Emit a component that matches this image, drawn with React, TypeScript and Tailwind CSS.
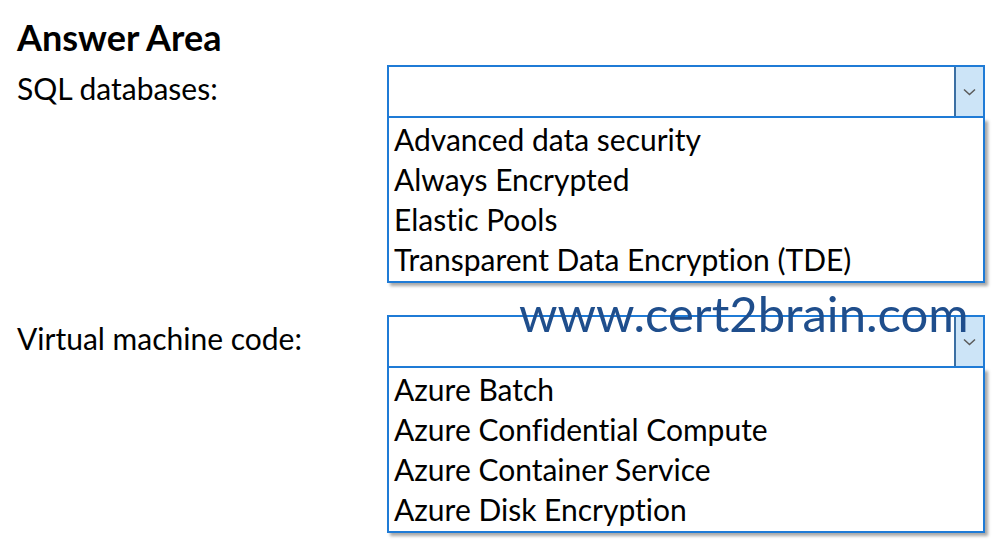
import React from 'react'

const font = { fontFamily: 'Lato, "Open Sans", sans-serif', fontVariantLigatures: 'none' as const }

function Chevron() {
  return (
    <svg width="13" height="8" viewBox="0 0 13 8" fill="none">
      <path d="M1 1.5 L6.5 6.5 L12 1.5" stroke="#5a5a5a" strokeWidth="1.5" />
    </svg>
  )
}

function Dropdown({ options }: { options: string[] }) {
  return (
    <div className="w-[598px]">
      <div className="flex h-[53px] border-2 border-[#1f7bd6] bg-white">
        <div className="flex-1" />
        <div className="flex w-[29px] items-center justify-center border-l-2 border-[#3b6fa3] bg-[#cce4f7]">
          <Chevron />
        </div>
      </div>
      <div className="border-2 border-t-0 border-[#1f7bd6] bg-white pb-[1px] pl-[5px] pt-[2px] shadow-[3px_3px_3px_rgba(0,0,0,0.35)]">
        {options.map((o) => (
          <div key={o} className="h-[40px] text-[30px] leading-[38px] text-black">
            {o}
          </div>
        ))}
      </div>
    </div>
  )
}

export default function App() {
  return (
    <div className="relative h-[549px] w-[998px] bg-white pl-[17px] pt-[19px]" style={font}>
      <h1 className="text-[36px] font-bold leading-[36px] text-black">Answer Area</h1>
      <div className="mt-[10px] grid grid-cols-[370px_598px]">
        <div className="pt-[4px] text-[30px] leading-[38px] text-black">SQL databases:</div>
        <Dropdown
          options={[
            'Advanced data security',
            'Always Encrypted',
            'Elastic Pools',
            'Transparent Data Encryption (TDE)',
          ]}
        />
      </div>
      <div className="mt-[32px] grid grid-cols-[370px_598px]">
        <div className="pt-[4px] text-[30px] leading-[38px] text-black">Virtual machine code:</div>
        <Dropdown
          options={[
            'Azure Batch',
            'Azure Confidential Compute',
            'Azure Container Service',
            'Azure Disk Encryption',
          ]}
        />
      </div>
      <div className="absolute left-[519px] top-[289px] text-[49px] leading-[48px] text-[#1f4e8c]">
        www.cert2brain.com
      </div>
    </div>
  )
}
